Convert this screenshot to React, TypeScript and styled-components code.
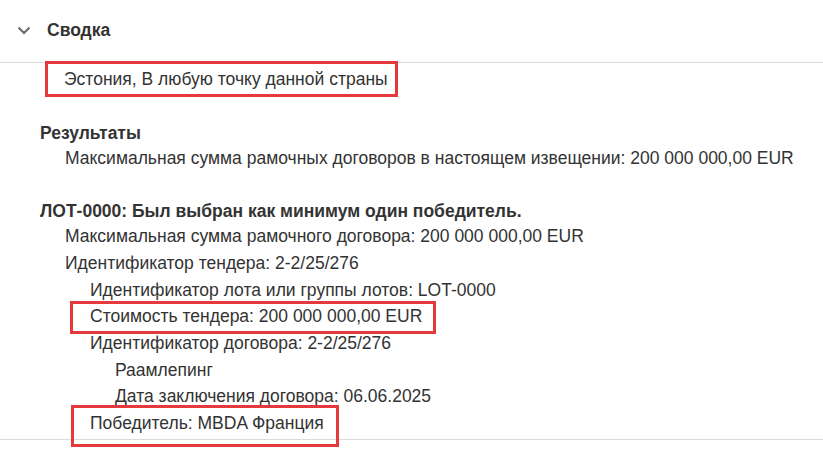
import styled, { createGlobalStyle } from "styled-components"
import { ReactNode } from "react"

const GlobalStyle = createGlobalStyle`
  html, body {
    margin: 0;
    padding: 0;
    background: #fff;
  }
  body {
    font-family: "Liberation Sans", Arial, sans-serif;
    font-size: 17.5px;
    color: #333;
  }
`

type Inset = [number, number, number, number]

interface NodeProps {
  label: ReactNode
  mark?: Inset
  children?: ReactNode
}

function Node({ label, mark, children }: NodeProps) {
  return (
    <Item>
      <Line>{mark ? <Mark $inset={mark}>{label}</Mark> : label}</Line>
      {children && <Nested>{children}</Nested>}
    </Item>
  )
}

function Chevron() {
  return (
    <svg width="14" height="9" viewBox="0 0 14 9" fill="none">
      <path d="M1.5 1.5 L7 7 L12.5 1.5" stroke="#6b6b6b" strokeWidth="2" />
    </svg>
  )
}

function App() {
  return (
    <Panel>
      <GlobalStyle />
      <Header>
        <Chevron />
        <Title>Сводка</Title>
      </Header>
      <Body>
        <Nested>
          <Node label="Эстония, В любую точку данной страны" mark={[5, 10, 4, 19]} />
        </Nested>
        <Section>
          <Heading>Результаты</Heading>
          <Nested>
            <Node label="Максимальная сумма рамочных договоров в настоящем извещении: 200 000 000,00 EUR" />
          </Nested>
        </Section>
        <Section>
          <Heading>ЛОТ-0000: Был выбран как минимум один победитель.</Heading>
          <Nested>
            <Node label="Максимальная сумма рамочного договора: 200 000 000,00 EUR" />
            <Node label="Идентификатор тендера: 2-2/25/276">
              <Node label="Идентификатор лота или группы лотов: LOT-0000" />
              <Node label="Стоимость тендера: 200 000 000,00 EUR" mark={[2, 14, 4, 20]} />
              <Node label="Идентификатор договора: 2-2/25/276">
                <Node label="Раамлепинг" />
                <Node label="Дата заключения договора: 06.06.2025" />
              </Node>
              <Node label="Победитель: MBDA Франция" mark={[5, 15, 10, 19]} />
            </Node>
          </Nested>
        </Section>
      </Body>
    </Panel>
  )
}

const Panel = styled.div`
  width: 823px;
  height: 453px;
  overflow: hidden;
`

const Header = styled.div`
  display: flex;
  align-items: center;
  gap: 16px;
  height: 63px;
  padding-left: 17px;
  padding-bottom: 1px;
  border-bottom: 1px solid #dcdcdc;
  box-sizing: border-box;
`

const Title = styled.h2`
  margin: 0;
  font-size: 17.5px;
  font-weight: bold;
  color: #333;
`

const Body = styled.div`
  padding: 3px 0 2px 40px;
  border-bottom: 1px solid #dcdcdc;
`

const Section = styled.div`
  margin-top: 28px;
`

const Heading = styled.div`
  font-weight: bold;
  line-height: 24px;
`

const Item = styled.div``

const Nested = styled.div`
  padding-left: 25px;
  &:first-child {
    padding-left: 24px;
  }
`

const Line = styled.div`
  line-height: 26.67px;
  white-space: nowrap;
`

const Mark = styled.span<{ $inset: Inset }>`
  position: relative;
  display: inline-block;
  &::after {
    content: "";
    position: absolute;
    top: ${(p) => -p.$inset[0]}px;
    right: ${(p) => -p.$inset[1]}px;
    bottom: ${(p) => -p.$inset[2]}px;
    left: ${(p) => -p.$inset[3]}px;
    border: 3px solid #e5393d;
    pointer-events: none;
  }
`

export default App
